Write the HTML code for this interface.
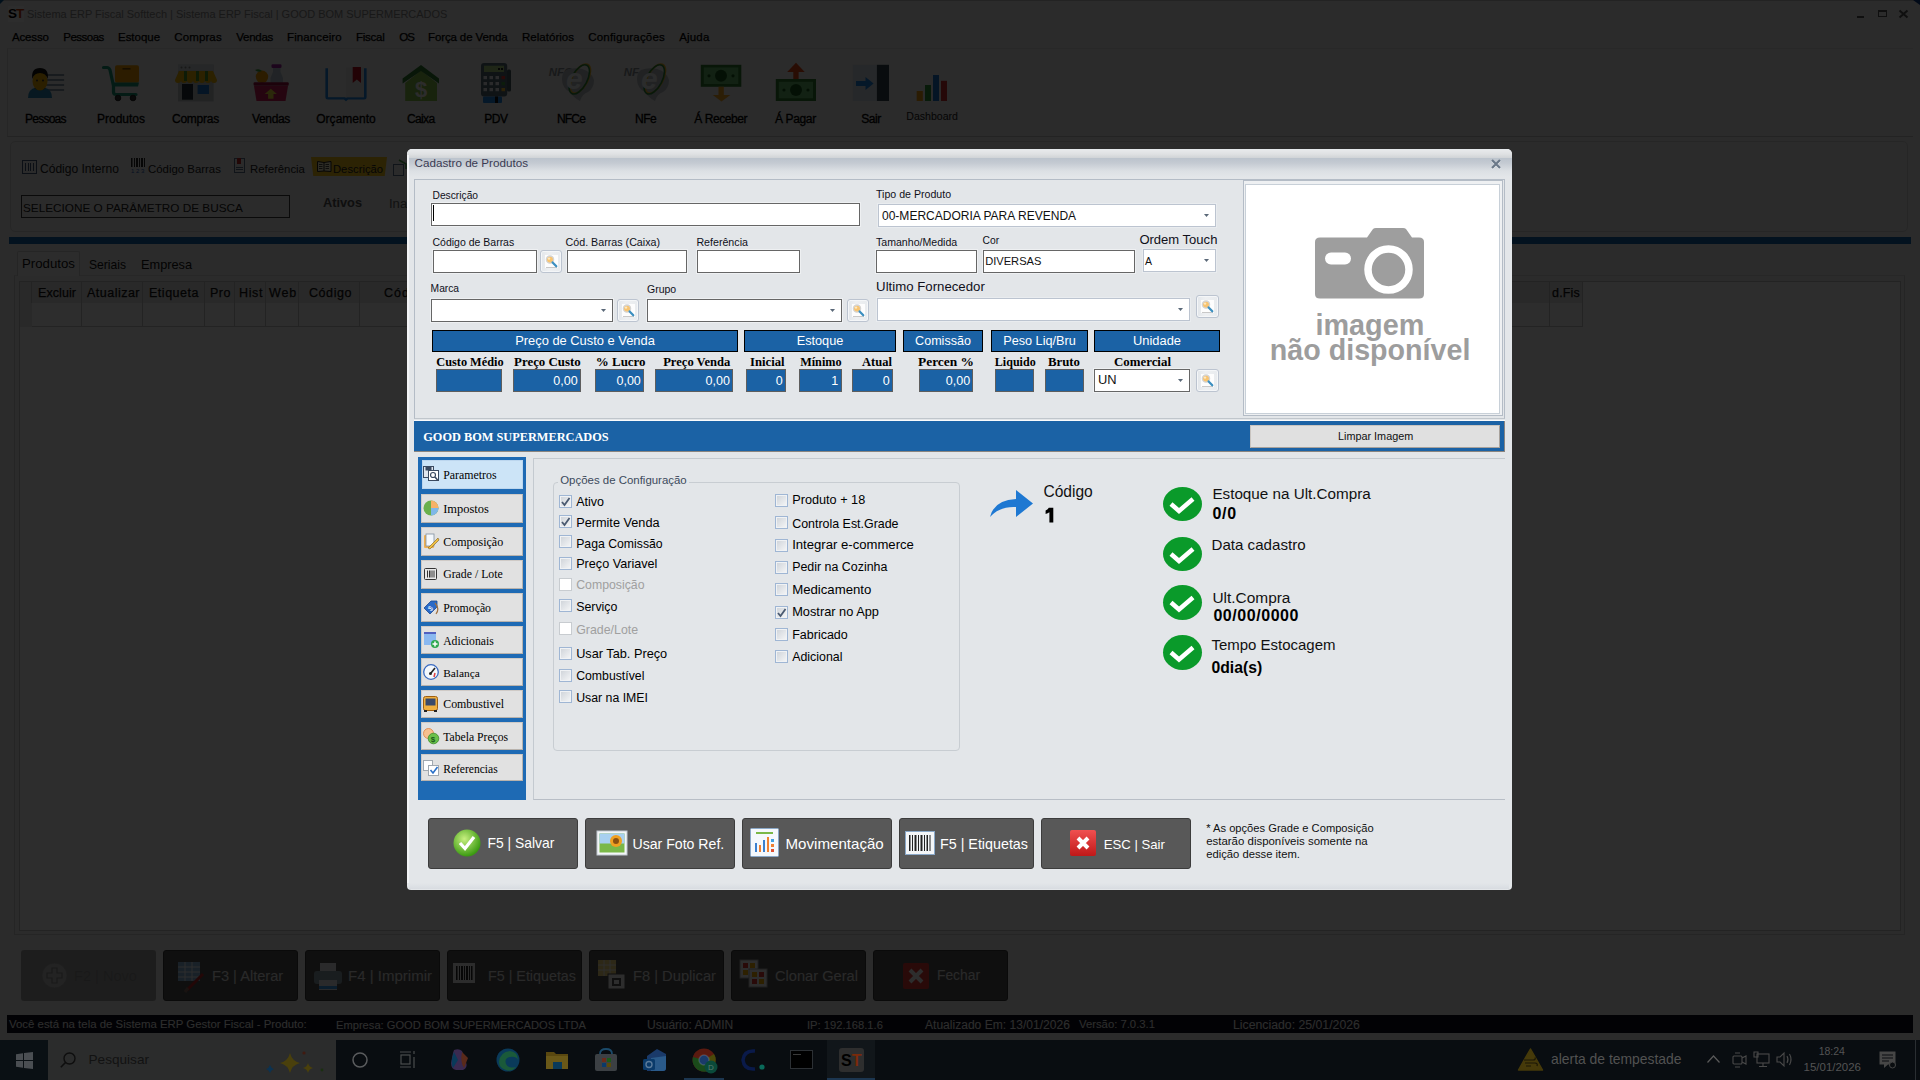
<!DOCTYPE html>
<html><head><meta charset="utf-8">
<style>
*{box-sizing:border-box;margin:0;padding:0}
html,body{width:1920px;height:1080px;overflow:hidden;background:#f0f0f0;font-family:"Liberation Sans",sans-serif;font-size:12px;color:#000;position:relative}
.a{position:absolute}
.t{position:absolute;white-space:nowrap;line-height:1}
svg.a{overflow:visible}
</style></head><body>
<div class="a" style="left:0px;top:0px;width:1920px;height:1080px;background:#f0f0f0"></div>
<div class="a" style="left:0px;top:0px;width:1920px;height:1px;background:#c8c8c8"></div>
<div class="a" style="left:8px;top:6px;width:16px;height:16px;background:#fff"></div>
<div class="t" style="left:8.00px;top:7.37px;font-size:13.5px;color:#000;font-weight:bold;font-family:'Liberation Sans';letter-spacing:-1px;"><span style="color:#000">S</span><span style="color:#c83a0a">T</span></div>
<div class="a" style="left:0px;top:0px;width:4px;height:4px;background:#0a5a9a;clip-path:polygon(0 0,100% 0,0 100%)"></div>
<div class="t" style="left:27.00px;top:8.91px;font-size:10.97px;color:#8a8a8a;font-weight:normal;font-family:'Liberation Sans';">Sistema ERP Fiscal Softtech | Sistema ERP Fiscal | GOOD BOM SUPERMERCADOS</div>
<div class="a" style="left:1857px;top:16px;width:7px;height:2px;background:#555"></div>
<div class="a" style="left:1878px;top:10px;width:9px;height:7px;border:1px solid #555;border-top-width:2px"></div>
<svg class="a" style="left:1899px;top:10px" width="9" height="8" viewBox="0 0 9 8"><path d="M0.5 0.5 L8.5 7.5 M8.5 0.5 L0.5 7.5" stroke="#555" stroke-width="2"/></svg>
<div class="a" style="left:1913px;top:0px;width:7px;height:5px;background:#0b3a8a;clip-path:polygon(0 0,100% 0,100% 100%)"></div>
<div class="t" style="left:12.00px;top:31.77px;font-size:11.5px;color:#000;font-weight:normal;font-family:'Liberation Sans';-webkit-text-stroke:0.25px #000;letter-spacing:-0.160px;">Acesso</div>
<div class="t" style="left:63.25px;top:31.77px;font-size:11.5px;color:#000;font-weight:normal;font-family:'Liberation Sans';-webkit-text-stroke:0.25px #000;letter-spacing:-0.515px;">Pessoas</div>
<div class="t" style="left:118.00px;top:31.77px;font-size:11.5px;color:#000;font-weight:normal;font-family:'Liberation Sans';-webkit-text-stroke:0.25px #000;letter-spacing:-0.028px;">Estoque</div>
<div class="t" style="left:174.25px;top:31.77px;font-size:11.5px;color:#000;font-weight:normal;font-family:'Liberation Sans';-webkit-text-stroke:0.25px #000;letter-spacing:0.121px;">Compras</div>
<div class="t" style="left:236.25px;top:31.77px;font-size:11.5px;color:#000;font-weight:normal;font-family:'Liberation Sans';-webkit-text-stroke:0.25px #000;letter-spacing:-0.270px;">Vendas</div>
<div class="t" style="left:287.00px;top:31.77px;font-size:11.5px;color:#000;font-weight:normal;font-family:'Liberation Sans';-webkit-text-stroke:0.25px #000;letter-spacing:0.106px;">Financeiro</div>
<div class="t" style="left:356.00px;top:31.77px;font-size:11.5px;color:#000;font-weight:normal;font-family:'Liberation Sans';-webkit-text-stroke:0.25px #000;letter-spacing:-0.255px;">Fiscal</div>
<div class="t" style="left:399.25px;top:31.77px;font-size:11.5px;color:#000;font-weight:normal;font-family:'Liberation Sans';-webkit-text-stroke:0.25px #000;letter-spacing:-1.058px;">OS</div>
<div class="t" style="left:428.00px;top:31.77px;font-size:11.5px;color:#000;font-weight:normal;font-family:'Liberation Sans';-webkit-text-stroke:0.25px #000;letter-spacing:-0.121px;">Força de Venda</div>
<div class="t" style="left:522.00px;top:31.77px;font-size:11.5px;color:#000;font-weight:normal;font-family:'Liberation Sans';-webkit-text-stroke:0.25px #000;letter-spacing:0.023px;">Relatórios</div>
<div class="t" style="left:588.25px;top:31.77px;font-size:11.5px;color:#000;font-weight:normal;font-family:'Liberation Sans';-webkit-text-stroke:0.25px #000;letter-spacing:0.200px;">Configurações</div>
<div class="t" style="left:679.25px;top:31.77px;font-size:11.5px;color:#000;font-weight:normal;font-family:'Liberation Sans';-webkit-text-stroke:0.25px #000;letter-spacing:0.167px;">Ajuda</div>
<div class="a" style="left:7px;top:48px;width:1906px;height:89px;border-left:1px solid #d5d5d5;border-top:1px solid #e4e4e4;border-bottom:1px solid #c4c4c4"></div>
<div class="t" style="left:25.00px;top:112.84px;font-size:12px;color:#000;font-weight:normal;font-family:'Liberation Sans';-webkit-text-stroke:0.3px #000;letter-spacing:-0.754px;">Pessoas</div>
<div class="t" style="left:97.00px;top:112.84px;font-size:12px;color:#000;font-weight:normal;font-family:'Liberation Sans';-webkit-text-stroke:0.3px #000;letter-spacing:-0.004px;">Produtos</div>
<div class="t" style="left:172.00px;top:112.84px;font-size:12px;color:#000;font-weight:normal;font-family:'Liberation Sans';-webkit-text-stroke:0.3px #000;letter-spacing:-0.240px;">Compras</div>
<div class="t" style="left:252.00px;top:112.84px;font-size:12px;color:#000;font-weight:normal;font-family:'Liberation Sans';-webkit-text-stroke:0.3px #000;letter-spacing:-0.340px;">Vendas</div>
<div class="t" style="left:316.25px;top:112.84px;font-size:12px;color:#000;font-weight:normal;font-family:'Liberation Sans';-webkit-text-stroke:0.3px #000;letter-spacing:0.016px;">Orçamento</div>
<div class="t" style="left:407.00px;top:112.84px;font-size:12px;color:#000;font-weight:normal;font-family:'Liberation Sans';-webkit-text-stroke:0.3px #000;letter-spacing:-0.636px;">Caixa</div>
<div class="t" style="left:484.25px;top:112.84px;font-size:12px;color:#000;font-weight:normal;font-family:'Liberation Sans';-webkit-text-stroke:0.3px #000;letter-spacing:-0.475px;">PDV</div>
<div class="t" style="left:557.00px;top:112.84px;font-size:12px;color:#000;font-weight:normal;font-family:'Liberation Sans';-webkit-text-stroke:0.3px #000;letter-spacing:-0.834px;">NFCe</div>
<div class="t" style="left:635.00px;top:112.84px;font-size:12px;color:#000;font-weight:normal;font-family:'Liberation Sans';-webkit-text-stroke:0.3px #000;letter-spacing:-0.473px;">NFe</div>
<div class="t" style="left:694.25px;top:112.84px;font-size:12px;color:#000;font-weight:normal;font-family:'Liberation Sans';-webkit-text-stroke:0.3px #000;letter-spacing:-0.438px;">Á Receber</div>
<div class="t" style="left:775.00px;top:112.84px;font-size:12px;color:#000;font-weight:normal;font-family:'Liberation Sans';-webkit-text-stroke:0.3px #000;letter-spacing:-0.373px;">Á Pagar</div>
<div class="t" style="left:861.25px;top:112.84px;font-size:12px;color:#000;font-weight:normal;font-family:'Liberation Sans';-webkit-text-stroke:0.3px #000;letter-spacing:-0.460px;">Sair</div>
<div class="t" style="left:906.25px;top:111.04px;font-size:10.58px;color:#222;font-weight:normal;font-family:'Liberation Sans';">Dashboard</div>
<svg class="a" style="left:26px;top:64px" width="40" height="40" viewBox="0 0 40 40"><g fill="#8a9aaa"><rect x="18.6" y="10" width="19.5" height="2"/><rect x="18.6" y="15" width="19.5" height="2"/><rect x="18.6" y="20" width="19.5" height="2"/><rect x="18.6" y="25" width="19.5" height="2"/></g><path d="M2 34 Q2 25 10 23.5 L18 23.5 Q26 25 26 34Z" fill="#2a8ab8"/><path d="M9 23.5 Q14 27 19 23.5" stroke="#0a3a6a" stroke-width="2" fill="none"/><ellipse cx="14" cy="17" rx="7.5" ry="9.5" fill="#f0b000"/><path d="M6.2 15 Q5 4 14 4 Q23 4 21.8 15 Q20 9 14 9 Q8 9 6.2 15Z" fill="#111"/><circle cx="11" cy="16.5" r="1" fill="#333"/><circle cx="17" cy="16.5" r="1" fill="#333"/></svg>
<svg class="a" style="left:102px;top:64px" width="40" height="40" viewBox="0 0 40 40"><path d="M1.5 3.5 L5 3.5 Q7 3.5 8 6 L11.5 22 L11.5 28 Q11.5 30.5 14 30.5 L34 30.5" stroke="#1a9a7a" stroke-width="3.2" fill="none" stroke-linecap="round"/><rect x="13" y="1.3" width="24" height="17.5" rx="2" fill="#f5a000"/><rect x="20.5" y="4" width="8" height="1.6" fill="#7a4a00"/><path d="M10 18.5 L37 18.5 L36 22.5 L11 22.5Z" fill="#1a9a7a"/><circle cx="16" cy="34" r="2.8" fill="#333" stroke="#222"/><circle cx="31" cy="34" r="2.8" fill="#333" stroke="#222"/></svg>
<svg class="a" style="left:176px;top:64px" width="40" height="40" viewBox="0 0 40 40"><rect x="2" y="0.7" width="35.6" height="36.7" fill="#c0c4c8"/><rect x="2" y="0.7" width="35.6" height="6" fill="#d8dcdf"/><circle cx="5.5" cy="3.6" r="1" fill="#888"/><circle cx="9.5" cy="3.6" r="1" fill="#888"/><circle cx="13.5" cy="3.6" r="1" fill="#888"/><path d="M3 7 L37 7 L41 16 Q41 19 38 19 Q35 19 35 16 Q35 19 32 19 Q29 19 29 16 Q29 19 26 19 Q23 19 23 16 Q23 19 20 19 Q17 19 17 16 Q17 19 14 19 Q11 19 11 16 Q11 19 8 19 Q5 19 5 16 Q5 19 2 19 Q-1 19 -1 16Z" fill="#f5b800"/><path d="M8 7 L11 7 L11 17 L8 17Z M20 7 L23 7 L23 17 L20 17Z M29 7 L32 7 L32 17 L29 17Z" fill="#4a9a2a"/><rect x="6" y="20" width="11" height="15.7" fill="#263238"/><rect x="21.6" y="21" width="11.4" height="9" fill="#1e78d2"/></svg>
<svg class="a" style="left:252px;top:64px" width="40" height="40" viewBox="0 0 40 40"><rect x="19.5" y="0.3" width="10" height="3.6" rx="1.2" fill="#a020a0"/><path d="M21 3.9 L28.5 3.9 L28.5 8 L31 14 L31 19 L18.5 19 L18.5 14 L21 8Z" fill="#b8c8d4"/><circle cx="10" cy="12.8" r="6.2" fill="#f5a000"/><path d="M3 6 Q7 4 10 7 Q6 9 3 6Z" fill="#3aa03a"/><path d="M2 22 L36 22 L33.5 37 L4.5 37Z" fill="#d0205a"/><rect x="1.6" y="18.2" width="35.1" height="3.6" rx="1" fill="#a01040"/><path d="M18.8 24.7 L24.9 30 L21.5 30 L21.5 34.8 L16.1 34.8 L16.1 30 L12.7 30Z" fill="#f0e040"/></svg>
<svg class="a" style="left:327px;top:64px" width="40" height="40" viewBox="0 0 40 40"><path d="M-0.3 4.2 L-0.3 33 Q-0.3 34.2 1 34.2 L17.5 34.2 L19 35.5 L20.5 34.2 L37 34.2 Q38.3 34.2 38.3 33 L38.3 4.2" fill="none" stroke="#1e88e5" stroke-width="2.6"/><rect x="1" y="3.2" width="36" height="30" fill="#f4f4f4"/><rect x="19" y="3.2" width="18" height="30" fill="#e8e8e8"/><path d="M25.7 3 L34 3 L34 19 L29.85 15.5 L25.7 19Z" fill="#c01020"/></svg>
<svg class="a" style="left:402px;top:64px" width="40" height="40" viewBox="0 0 40 40"><path d="M3.2 19 L19 6.5 L35 19 L35 37 L3.2 37Z" fill="#8bc34a"/><path d="M19 1 L37 14.5 L37 19.6 L19 7 L0.6 19.6 L0.6 14.5Z" fill="#2e7d32"/><text x="19.2" y="33" font-size="22" font-weight="bold" text-anchor="middle" fill="#fafafa" font-family="Liberation Sans">$</text></svg>
<svg class="a" style="left:477px;top:64px" width="40" height="40" viewBox="0 0 40 40"><rect x="30" y="5.6" width="4" height="22" rx="1.5" fill="#455a64"/><rect x="4" y="-1" width="26.2" height="33.5" rx="3" fill="#546e7a"/><rect x="7" y="1.7" width="20" height="6.3" fill="#aed581"/><rect x="21" y="4" width="2" height="2" fill="#222"/><rect x="24" y="4" width="2" height="2" fill="#222"/><g fill="#eceff1"><rect x="6.5" y="12" width="3.5" height="3.2"/><rect x="12.5" y="12" width="3.5" height="3.2"/><rect x="18.5" y="12" width="3.5" height="3.2"/><rect x="6.5" y="18" width="3.5" height="3.2"/><rect x="12.5" y="18" width="3.5" height="3.2"/><rect x="18.5" y="18" width="3.5" height="3.2"/><rect x="6.5" y="24" width="3.5" height="3.2"/><rect x="12.5" y="24" width="3.5" height="3.2"/><rect x="18.5" y="24" width="3.5" height="3.2"/></g><rect x="24.5" y="12" width="3.5" height="3.2" fill="#e53935"/><rect x="24.5" y="18" width="3.5" height="3.2" fill="#43a047"/><rect x="24.5" y="24" width="3.5" height="3.2" fill="#fbc02d"/><rect x="6" y="32.5" width="19" height="6.5" rx="1" fill="#1e88e5"/><rect x="18" y="32.5" width="3" height="6.5" fill="#111"/></svg>
<svg class="a" style="left:552px;top:64px" width="40" height="40" viewBox="0 0 40 40"><text x="-3.3" y="11.8" font-size="11.5" font-style="italic" font-weight="bold" fill="#8a9096" font-family="Liberation Sans">NFC</text><path d="M14 6 Q22 3 30 5 Q40 8 42 16 Q42 24 36 28 Q30 30 28 37 Q22 34 18 28 Q10 24 10 15 Q10 9 14 6Z" fill="#b8bec4"/><ellipse cx="28.3" cy="14.6" rx="7.8" ry="16" transform="rotate(28 28.3 14.6)" fill="none" stroke="#f9b825" stroke-width="1.6"/><ellipse cx="27.3" cy="15.4" rx="7.8" ry="16" transform="rotate(28 27.3 15.4)" fill="none" stroke="#2e8b3a" stroke-width="1.6"/><text x="14" y="25" font-size="30" font-style="italic" font-weight="bold" fill="#f4f6f8" font-family="Liberation Sans">e</text></svg>
<svg class="a" style="left:627px;top:64px" width="40" height="40" viewBox="0 0 40 40"><text x="-3.3" y="11.8" font-size="11.5" font-style="italic" font-weight="bold" fill="#8a9096" font-family="Liberation Sans">NF</text><path d="M14 6 Q22 3 30 5 Q40 8 42 16 Q42 24 36 28 Q30 30 28 37 Q22 34 18 28 Q10 24 10 15 Q10 9 14 6Z" fill="#b8bec4"/><ellipse cx="28.3" cy="14.6" rx="7.8" ry="16" transform="rotate(28 28.3 14.6)" fill="none" stroke="#f9b825" stroke-width="1.6"/><ellipse cx="27.3" cy="15.4" rx="7.8" ry="16" transform="rotate(28 27.3 15.4)" fill="none" stroke="#2e8b3a" stroke-width="1.6"/><text x="14" y="25" font-size="30" font-style="italic" font-weight="bold" fill="#f4f6f8" font-family="Liberation Sans">e</text></svg>
<svg class="a" style="left:702px;top:64px" width="40" height="40" viewBox="0 0 40 40"><rect x="-1.2" y="0.8" width="40.5" height="22" fill="#2e7d32"/><rect x="1.8" y="3.5" width="34.5" height="16.5" fill="#66bb6a"/><circle cx="19" cy="11.8" r="6" fill="#1b5e20"/><circle cx="7" cy="11.8" r="1.6" fill="#1b5e20"/><circle cx="31" cy="11.8" r="1.6" fill="#1b5e20"/><rect x="16.5" y="22.7" width="5.3" height="9" fill="#f9a825"/><path d="M10.8 31 L28.3 31 L19.5 37.5Z" fill="#f9a825"/></svg>
<svg class="a" style="left:776px;top:64px" width="40" height="40" viewBox="0 0 40 40"><path d="M20 -1.3 L28.7 8 L11.2 8Z" fill="#e64a19"/><rect x="17.3" y="7.5" width="5.3" height="8" fill="#e64a19"/><rect x="-0.2" y="15" width="40.2" height="22" fill="#2e7d32"/><rect x="2.8" y="17.8" width="34.2" height="16.5" fill="#66bb6a"/><circle cx="20" cy="26" r="6" fill="#1b5e20"/><circle cx="8" cy="26" r="1.6" fill="#1b5e20"/><circle cx="32" cy="26" r="1.6" fill="#1b5e20"/></svg>
<svg class="a" style="left:852px;top:64px" width="40" height="40" viewBox="0 0 40 40"><rect x="0.8" y="0.8" width="24.1" height="36.2" fill="#d8e0ea"/><rect x="24.9" y="0.8" width="12.1" height="36.2" fill="#37474f"/><path d="M4 17 L13.5 17 L13.5 12.9 L21.6 19.5 L13.5 26 L13.5 22 L4 22Z" fill="#1e88e5"/></svg>
<svg class="a" style="left:916px;top:75px" width="32" height="26" viewBox="0 0 32 26"><rect x="0.7" y="16" width="6.1" height="10" fill="#f39c12"/><rect x="9" y="10" width="6" height="16" fill="#2e9a3a"/><rect x="17" y="0" width="6" height="26" fill="#1e78d2"/><rect x="25" y="5.8" width="6" height="20.2" fill="#d32f2f"/></svg>
<div class="a" style="left:10px;top:141px;width:1898px;height:91px;border:1px solid #d8d8d8;border-radius:5px"></div>
<div class="a" style="left:22px;top:160px;width:15px;height:14px;border:1.5px solid #405878;background:repeating-linear-gradient(90deg,#405878 0 1px,transparent 1px 2.5px);background-clip:content-box;padding:2px"></div>
<div class="t" style="left:40.00px;top:163.31px;font-size:12.04px;color:#222;font-weight:normal;font-family:'Liberation Sans';">Código Interno</div>
<svg class="a" style="left:131px;top:158px" width="14" height="15" viewBox="0 0 14 15"><g fill="#222"><rect x="0" y="0" width="1.5" height="9"/><rect x="3" y="0" width="1" height="9"/><rect x="5" y="0" width="2" height="9"/><rect x="8" y="0" width="1" height="9"/><rect x="10" y="0" width="2" height="9"/><rect x="13" y="0" width="1" height="9"/></g><text x="0" y="15" font-size="6" fill="#1e60c0" font-family="Liberation Sans">1 2 3</text></svg>
<div class="t" style="left:148.00px;top:163.83px;font-size:11.42px;color:#222;font-weight:normal;font-family:'Liberation Sans';">Código Barras</div>
<svg class="a" style="left:234px;top:158px" width="11" height="15" viewBox="0 0 11 15"><rect x="0.5" y="0.5" width="10" height="14" fill="#f4f4f4" stroke="#5a7090"/><rect x="3" y="0" width="4" height="6" fill="#c62828"/><rect x="2" y="9" width="7" height="1" fill="#5a7090"/><rect x="2" y="11" width="7" height="1" fill="#5a7090"/></svg>
<div class="t" style="left:250.00px;top:163.88px;font-size:11.37px;color:#222;font-weight:normal;font-family:'Liberation Sans';">Referência</div>
<div class="a" style="left:311px;top:157px;width:76px;height:19px;background:#f5c518;clip-path:polygon(0 0,100% 0,97% 100%,3% 100%)"></div>
<svg class="a" style="left:317px;top:161px" width="15" height="11" viewBox="0 0 15 11"><path d="M0.5 0.5 L7 1.5 L14 0.5 L14 10.5 L7 10 L0.5 10.5Z" fill="#fff8d0" stroke="#222"/><path d="M7 1.5 L7 10" stroke="#222"/><g stroke="#222" stroke-width="0.8"><path d="M2 3.5 H5.5 M2 5.5 H5.5 M2 7.5 H5.5 M8.5 3.5 H12 M8.5 5.5 H12 M8.5 7.5 H12"/></g></svg>
<div class="t" style="left:333.00px;top:163.98px;font-size:11.25px;color:#222;font-weight:normal;font-family:'Liberation Sans';">Descrição</div>
<svg class="a" style="left:393px;top:160px" width="14" height="16" viewBox="0 0 14 16"><rect x="0.5" y="4.5" width="10" height="11" fill="none" stroke="#5a7090"/><path d="M6 0 L13 4 L13 9" stroke="#43a047" fill="none" stroke-width="1.5"/></svg>
<div class="a" style="left:21px;top:195px;width:269px;height:23px;border:1px solid #3c3c3c;background:#f0f0f0"></div>
<div class="t" style="left:23.00px;top:201.55px;font-size:11.76px;color:#222;font-weight:normal;font-family:'Liberation Sans';">SELECIONE O PARÂMETRO DE BUSCA</div>
<div class="t" style="left:323.00px;top:197.20px;font-size:12.76px;color:#555;font-weight:bold;font-family:'Liberation Sans';">Ativos</div>
<div class="t" style="left:389.00px;top:196.94px;font-size:13.06px;color:#666;font-weight:normal;font-family:'Liberation Sans';">Inativos</div>
<div class="a" style="left:9px;top:237px;width:1902px;height:7px;background:#1565b0"></div>
<div class="a" style="left:14px;top:275px;width:1891px;height:660px;border:1px solid #cfcfcf;border-top-color:#dadada"></div>
<div class="a" style="left:17px;top:251px;width:63px;height:25px;border:1px solid #d0d0d0;border-bottom:none;background:#f9f9f9;border-radius:2px 2px 0 0"></div>
<div class="t" style="left:22.00px;top:257.29px;font-size:13.24px;color:#111;font-weight:normal;font-family:'Liberation Sans';">Produtos</div>
<div class="t" style="left:89.00px;top:259.26px;font-size:12.1px;color:#111;font-weight:normal;font-family:'Liberation Sans';">Seriais</div>
<div class="t" style="left:141.00px;top:258.71px;font-size:12.75px;color:#111;font-weight:normal;font-family:'Liberation Sans';">Empresa</div>
<div class="a" style="left:19px;top:281px;width:1882px;height:650px;border:1px solid #c4c4c4;background:#fdfdfd"></div>
<div class="a" style="left:20px;top:282px;width:1563px;height:21px;background:#e8e8e8"></div>
<div class="a" style="left:31px;top:282px;width:1px;height:45px;background:#c8c8c8"></div>
<div class="a" style="left:81px;top:282px;width:1px;height:45px;background:#c8c8c8"></div>
<div class="a" style="left:142px;top:282px;width:1px;height:45px;background:#c8c8c8"></div>
<div class="a" style="left:204px;top:282px;width:1px;height:45px;background:#c8c8c8"></div>
<div class="a" style="left:234px;top:282px;width:1px;height:45px;background:#c8c8c8"></div>
<div class="a" style="left:265px;top:282px;width:1px;height:45px;background:#c8c8c8"></div>
<div class="a" style="left:298px;top:282px;width:1px;height:45px;background:#c8c8c8"></div>
<div class="a" style="left:359px;top:282px;width:1px;height:45px;background:#c8c8c8"></div>
<div class="a" style="left:1549px;top:282px;width:1px;height:45px;background:#c8c8c8"></div>
<div class="a" style="left:1582px;top:282px;width:1px;height:45px;background:#c8c8c8"></div>
<div class="a" style="left:32px;top:326px;width:1551px;height:1px;background:#c8c8c8"></div>
<div class="a" style="left:20px;top:303px;width:12px;height:24px;background:#e6e6e6"></div>
<div class="t" style="left:38.00px;top:287.42px;font-size:12.5px;color:#111;font-weight:normal;font-family:'Liberation Sans';-webkit-text-stroke:0.25px #111;letter-spacing:0.071px;">Excluir</div>
<div class="t" style="left:87.00px;top:287.42px;font-size:12.5px;color:#111;font-weight:normal;font-family:'Liberation Sans';-webkit-text-stroke:0.25px #111;letter-spacing:0.485px;">Atualizar</div>
<div class="t" style="left:149.00px;top:287.42px;font-size:12.5px;color:#111;font-weight:normal;font-family:'Liberation Sans';-webkit-text-stroke:0.25px #111;letter-spacing:0.517px;">Etiqueta</div>
<div class="t" style="left:210.00px;top:287.42px;font-size:12.5px;color:#111;font-weight:normal;font-family:'Liberation Sans';-webkit-text-stroke:0.25px #111;letter-spacing:0.516px;">Pro</div>
<div class="t" style="left:239.00px;top:287.42px;font-size:12.5px;color:#111;font-weight:normal;font-family:'Liberation Sans';-webkit-text-stroke:0.25px #111;letter-spacing:0.618px;">Hist</div>
<div class="t" style="left:269.00px;top:287.42px;font-size:12.5px;color:#111;font-weight:normal;font-family:'Liberation Sans';-webkit-text-stroke:0.25px #111;letter-spacing:0.841px;">Web</div>
<div class="t" style="left:309.00px;top:287.42px;font-size:12.5px;color:#111;font-weight:normal;font-family:'Liberation Sans';-webkit-text-stroke:0.25px #111;letter-spacing:0.565px;">Código</div>
<div class="t" style="left:384.00px;top:287.42px;font-size:12.5px;color:#111;font-weight:normal;font-family:'Liberation Sans';-webkit-text-stroke:0.25px #111;letter-spacing:1.023px;">Cód</div>
<div class="t" style="left:1552.00px;top:287.42px;font-size:12.5px;color:#111;font-weight:normal;font-family:'Liberation Sans';-webkit-text-stroke:0.25px #111;letter-spacing:0.183px;">d.Fis</div>
<div class="a" style="left:21px;top:950px;width:135px;height:51px;background:#a6a6a6;border-radius:3px"></div>
<div class="a" style="left:163px;top:950px;width:135px;height:51px;background:#585858;border-radius:3px;border:1px solid #3a3a3a"></div>
<div class="a" style="left:305px;top:950px;width:135px;height:51px;background:#585858;border-radius:3px;border:1px solid #3a3a3a"></div>
<div class="a" style="left:447px;top:950px;width:135px;height:51px;background:#585858;border-radius:3px;border:1px solid #3a3a3a"></div>
<div class="a" style="left:589px;top:950px;width:135px;height:51px;background:#585858;border-radius:3px;border:1px solid #3a3a3a"></div>
<div class="a" style="left:731px;top:950px;width:135px;height:51px;background:#585858;border-radius:3px;border:1px solid #3a3a3a"></div>
<div class="a" style="left:873px;top:950px;width:135px;height:51px;background:#585858;border-radius:3px;border:1px solid #3a3a3a"></div>
<div class="t" style="left:74.00px;top:968.65px;font-size:14.59px;color:#909090;font-weight:normal;font-family:'Liberation Sans';">F2 | Novo</div>
<svg class="a" style="left:41px;top:962px" width="27" height="27" viewBox="0 0 27 27"><circle cx="13.5" cy="13.5" r="12.5" fill="#c4c4c4" stroke="#a0a0a0" stroke-width="0.6"/><path d="M11 6 H16 V11 H21 V16 H16 V21 H11 V16 H6 V11 H11Z" fill="#c4c4c4" stroke="#909090" stroke-width="1.2"/></svg>
<div class="t" style="left:212.00px;top:968.63px;font-size:14.61px;color:#e8e8e8;font-weight:normal;font-family:'Liberation Sans';">F3 | Alterar</div>
<svg class="a" style="left:178px;top:962px" width="30" height="30" viewBox="0 0 30 30"><rect x="0" y="0" width="22" height="19" fill="#90b8e0"/><g stroke="#fff" stroke-width="1"><path d="M0 5 H22 M0 10 H22 M0 15 H22 M7 0 V19 M14 0 V19"/></g><path d="M9 28 L25 12" stroke="#c62828" stroke-width="3"/><path d="M7 30 L10 26" stroke="#8d6e63" stroke-width="3"/></svg>
<div class="t" style="left:348.00px;top:968.29px;font-size:15.02px;color:#e8e8e8;font-weight:normal;font-family:'Liberation Sans';">F4 | Imprimir</div>
<svg class="a" style="left:313px;top:963px" width="30" height="28" viewBox="0 0 30 28"><rect x="7" y="0" width="16" height="9" fill="#eceff1"/><rect x="1" y="8" width="28" height="13" rx="3" fill="#90a4ae"/><rect x="6" y="17" width="18" height="10" fill="#eceff1"/><rect x="6" y="23" width="18" height="3" fill="#42a5f5"/></svg>
<div class="t" style="left:488.00px;top:968.90px;font-size:14.3px;color:#e8e8e8;font-weight:normal;font-family:'Liberation Sans';">F5 | Etiquetas</div>
<svg class="a" style="left:453px;top:963px" width="22" height="20" viewBox="0 0 22 20"><rect x="0" y="0" width="22" height="20" fill="#f5f5f5"/><g fill="#222"><rect x="3" y="3" width="1.5" height="14"/><rect x="6" y="3" width="1" height="14"/><rect x="8" y="3" width="2" height="14"/><rect x="11" y="3" width="1" height="14"/><rect x="13" y="3" width="2" height="14"/><rect x="16" y="3" width="1" height="14"/><rect x="18" y="3" width="1.5" height="14"/></g></svg>
<div class="t" style="left:633.00px;top:968.56px;font-size:14.69px;color:#e8e8e8;font-weight:normal;font-family:'Liberation Sans';">F8 | Duplicar</div>
<svg class="a" style="left:598px;top:960px" width="28" height="30" viewBox="0 0 28 30"><rect x="0" y="0" width="18" height="16" fill="#ffe082"/><g stroke="#fff"><path d="M0 5 H18 M0 10 H18 M6 0 V16 M12 0 V16"/></g><rect x="10" y="14" width="17" height="15" fill="#fff" stroke="#555"/><rect x="15" y="19" width="7" height="6" fill="none" stroke="#555" stroke-width="2"/></svg>
<div class="t" style="left:775.00px;top:968.61px;font-size:14.64px;color:#e8e8e8;font-weight:normal;font-family:'Liberation Sans';">Clonar Geral</div>
<svg class="a" style="left:740px;top:960px" width="28" height="28" viewBox="0 0 28 28"><rect x="0" y="0" width="18" height="18" fill="#fff" stroke="#aaa"/><rect x="3" y="3" width="5" height="5" fill="#e53935"/><rect x="10" y="3" width="5" height="5" fill="#ffb300"/><rect x="3" y="10" width="5" height="5" fill="#ffb300"/><rect x="10" y="10" width="5" height="5" fill="#e53935"/><rect x="9" y="9" width="18" height="18" fill="#fff" stroke="#aaa"/><rect x="12" y="12" width="5" height="5" fill="#ffb300"/><rect x="19" y="12" width="5" height="5" fill="#e53935"/><rect x="12" y="19" width="5" height="5" fill="#e53935"/><rect x="19" y="19" width="5" height="5" fill="#ffb300"/></svg>
<div class="t" style="left:937.00px;top:969.30px;font-size:13.82px;color:#e8e8e8;font-weight:normal;font-family:'Liberation Sans';">Fechar</div>
<svg class="a" style="left:903px;top:963px" width="26" height="26" viewBox="0 0 26 26"><rect x="0" y="0" width="26" height="26" rx="2" fill="#e53935"/><path d="M7 7 L19 19 M19 7 L7 19" stroke="#fff" stroke-width="4"/></svg>
<div class="a" style="left:7px;top:1015px;width:1906px;height:18px;background:#10101e"></div>
<div class="t" style="left:9.00px;top:1019.34px;font-size:11.41px;color:#fff;font-weight:normal;font-family:'Liberation Sans';">Você está na tela de Sistema ERP Gestor Fiscal - Produto:</div>
<div class="t" style="left:336.00px;top:1019.56px;font-size:11.15px;color:#fff;font-weight:normal;font-family:'Liberation Sans';">Empresa: GOOD BOM SUPERMERCADOS LTDA</div>
<div class="t" style="left:647.00px;top:1018.81px;font-size:12.04px;color:#fff;font-weight:normal;font-family:'Liberation Sans';">Usuário: ADMIN</div>
<div class="t" style="left:807.00px;top:1019.52px;font-size:11.2px;color:#fff;font-weight:normal;font-family:'Liberation Sans';">IP: 192.168.1.6</div>
<div class="t" style="left:925.00px;top:1018.78px;font-size:12.07px;color:#fff;font-weight:normal;font-family:'Liberation Sans';">Atualizado Em: 13/01/2026</div>
<div class="t" style="left:1079.00px;top:1019.43px;font-size:11.3px;color:#fff;font-weight:normal;font-family:'Liberation Sans';">Versão: 7.0.3.1</div>
<div class="t" style="left:1233.00px;top:1018.60px;font-size:12.28px;color:#fff;font-weight:normal;font-family:'Liberation Sans';">Licenciado: 25/01/2026</div>
<div class="a" style="left:0px;top:0px;width:1920px;height:1080px;background:rgba(0,0,0,0.825)"></div>
<div class="a" style="left:0px;top:1040px;width:1920px;height:40px;background:#090d11"></div>
<div class="a" style="left:0px;top:1040px;width:48px;height:40px;background:#0a1014"></div>
<svg class="a" style="left:16px;top:1052px" width="17" height="17" viewBox="0 0 17 17"><g fill="#4a4e52"><path d="M0 2.3 L7 1.3 V8 H0Z"/><path d="M8 1.1 L17 0 V8 H8Z"/><path d="M0 9 H7 V15.7 L0 14.7Z"/><path d="M8 9 H17 V17 L8 15.9Z"/></g></svg>
<div class="a" style="left:48px;top:1040px;width:288px;height:40px;background:#2b2c2c"></div>
<svg class="a" style="left:60px;top:1052px" width="16" height="16" viewBox="0 0 16 16"><circle cx="9.5" cy="6.5" r="5.5" fill="none" stroke="#0e0e0e" stroke-width="1.4"/><path d="M5.5 10.5 L0.8 15.2" stroke="#0e0e0e" stroke-width="1.6"/></svg>
<div class="t" style="left:88.50px;top:1053.48px;font-size:13.61px;color:#121212;font-weight:normal;font-family:'Liberation Sans';">Pesquisar</div>
<svg class="a" style="left:264px;top:1047px" width="64" height="26" viewBox="0 0 64 26"><path d="M26 6 Q28 14 36 16 Q28 18 26 26 Q24 18 16 16 Q24 14 26 6Z" fill="#4a400c"/><path d="M44 16 Q45 20 49 21 Q45 22 44 26 Q43 22 39 21 Q43 20 44 16Z" fill="#4a400c"/><path d="M6 18 Q7 21 10 22 Q7 23 6 26 Q5 23 2 22 Q5 21 6 18Z" fill="#0c3250"/><circle cx="40" cy="6" r="1.6" fill="#401a10"/><circle cx="58" cy="23" r="1.4" fill="#1a3010"/></svg>
<svg class="a" style="left:352px;top:1052px" width="16" height="16" viewBox="0 0 16 16"><circle cx="8" cy="8" r="7" fill="none" stroke="#5a5c5e" stroke-width="1.5"/></svg>
<svg class="a" style="left:400px;top:1050px" width="16" height="20" viewBox="0 0 16 20"><g fill="none" stroke="#4a4c4e" stroke-width="1.2"><rect x="1" y="5" width="9" height="9"/><path d="M0 2 H11 M0 17 H11 M14 1 V4 M14 7 V18"/></g></svg>
<svg class="a" style="left:448px;top:1048px" width="23" height="23" viewBox="0 0 23 23"><path d="M6 2 Q11 0 14 3 L18 14 Q20 20 15 22 L8 22 Q3 21 3 15 L5 5Z" fill="#3a2a50"/><path d="M6 4 L10 12 L5 20 Q2 14 6 4Z" fill="#0a3a5a"/><path d="M14 4 L20 10 L16 20 Q12 14 14 4Z" fill="#5a2a1a"/></svg>
<svg class="a" style="left:496px;top:1048px" width="24" height="24" viewBox="0 0 24 24"><circle cx="12" cy="12" r="11.5" fill="#0a3a5a"/><path d="M3 14 Q4 4 14 3 Q22 4 22 12 Q20 8 14 9 Q8 10 10 16 Q12 21 20 19 Q16 24 10 22 Q3 20 3 14Z" fill="#1a5a3a"/></svg>
<svg class="a" style="left:546px;top:1050px" width="22" height="20" viewBox="0 0 22 20"><path d="M0 2 H8 L10 4 H22 V19 H0Z" fill="#5a4810"/><rect x="0" y="6" width="22" height="13" fill="#6a5818"/><rect x="7" y="12" width="9" height="7" fill="#0a3a5a"/></svg>
<svg class="a" style="left:594px;top:1048px" width="24" height="24" viewBox="0 0 24 24"><path d="M6 6 Q6 1 12 1 Q18 1 18 6" fill="none" stroke="#1a4a6a" stroke-width="1.8"/><rect x="1" y="6" width="22" height="17" rx="2" fill="#3c4044"/><rect x="8" y="10" width="4" height="4" fill="#6a2a1a"/><rect x="13" y="10" width="4" height="4" fill="#1a5a1a"/><rect x="8" y="15" width="4" height="4" fill="#0a3a6a"/><rect x="13" y="15" width="4" height="4" fill="#5a4a0a"/></svg>
<svg class="a" style="left:643px;top:1048px" width="24" height="24" viewBox="0 0 24 24"><path d="M4 8 L14 1 L23 6 V20 Q23 23 20 23 H4Z" fill="#1a3a6a"/><path d="M8 10 L23 8 V20 Q23 23 20 23 H8Z" fill="#2a5a8a"/><rect x="0" y="11" width="12" height="11" rx="1.5" fill="#0a3a6a"/><circle cx="6" cy="16.5" r="3" fill="none" stroke="#5a7a9a" stroke-width="1.4"/></svg>
<svg class="a" style="left:692px;top:1048px" width="26" height="26" viewBox="0 0 26 26"><circle cx="12" cy="12" r="11.5" fill="#5a1a10"/><path d="M12 12 L22 6 A11.5 11.5 0 0 1 14 23.5Z" fill="#4a4a0a"/><path d="M12 12 L14 23.5 A11.5 11.5 0 0 1 1 9Z" fill="#1a4a1a"/><circle cx="12" cy="12" r="5" fill="#1a3a6a" stroke="#ccc" stroke-opacity="0.2" stroke-width="1.5"/><circle cx="19" cy="19" r="6.5" fill="#0a4a3a"/><text x="19" y="22" font-size="8" text-anchor="middle" fill="#5a7a70" font-family="Liberation Sans">D</text></svg>
<svg class="a" style="left:741px;top:1049px" width="25" height="22" viewBox="0 0 25 22"><path d="M14 2 Q3 1 2 11 Q3 21 14 20" fill="none" stroke="#0a1a4a" stroke-width="3.5"/><circle cx="21" cy="18" r="2.6" fill="#0a6a5a"/></svg>
<div class="a" style="left:790px;top:1050px;width:23px;height:19px;background:#000;border:1px solid #2c3034"></div>
<div class="a" style="left:793px;top:1054px;width:8px;height:1px;background:#3a3a3a"></div>
<div class="a" style="left:827px;top:1040px;width:48px;height:40px;background:#11161a"></div>
<div class="a" style="left:839px;top:1048px;width:25px;height:24px;background:#2e2e2e;border-radius:3px"></div>
<div class="t" style="left:841.00px;top:1053.46px;font-size:16px;color:#000;font-weight:bold;font-family:'Liberation Sans';"><span style="color:#000">S</span><span style="color:#7a2a0a">T</span></div>
<div class="a" style="left:684px;top:1078px;width:40px;height:2px;background:#1c3650"></div>
<div class="a" style="left:827px;top:1078px;width:48px;height:2px;background:#1c3650"></div>
<svg class="a" style="left:1518px;top:1048px" width="25" height="23" viewBox="0 0 25 23"><path d="M12.5 1 L24.5 22 H0.5Z" fill="#463a0a" stroke="#463a0a" stroke-linejoin="round" stroke-width="1.5"/><path d="M6 12 H15 Q18 12 17 9.5 M7 15 H17 Q20 15 19 18 M8 18 H13" stroke="#1a1606" fill="none" stroke-width="1.2"/></svg>
<div class="t" style="left:1551.00px;top:1052.63px;font-size:13.9px;color:#525252;font-weight:normal;font-family:'Liberation Sans';">alerta de tempestade</div>
<svg class="a" style="left:1707px;top:1055px" width="13" height="8" viewBox="0 0 13 8"><path d="M0.5 7.5 L6.5 1 L12.5 7.5" stroke="#5a5a5a" fill="none" stroke-width="1.2"/></svg>
<svg class="a" style="left:1732px;top:1052px" width="16" height="16" viewBox="0 0 16 16"><g fill="none" stroke="#4a4a4a" stroke-width="1.1"><rect x="1" y="4" width="9" height="8" rx="1"/><path d="M10 6 L14 4 V12 L10 10"/><path d="M3 1 H8 M3 15 H8"/></g></svg>
<svg class="a" style="left:1753px;top:1051px" width="17" height="17" viewBox="0 0 17 17"><g fill="none" stroke="#4a4a4a" stroke-width="1.1"><rect x="4" y="3" width="12" height="9"/><path d="M10 12 V15 M6 15.5 H14 M1 1 H5 V6 H1Z"/></g></svg>
<svg class="a" style="left:1776px;top:1052px" width="17" height="15" viewBox="0 0 17 15"><g fill="none" stroke="#4a4a4a" stroke-width="1.1"><path d="M1 5 H4 L8 1 V14 L4 10 H1Z"/><path d="M11 4 Q13 7.5 11 11 M13.5 2 Q16.5 7.5 13.5 13"/></g></svg>
<div class="t" style="left:1818.70px;top:1045.70px;font-size:10.51px;color:#545454;font-weight:normal;font-family:'Liberation Sans';">18:24</div>
<div class="t" style="left:1803.60px;top:1062.39px;font-size:11.47px;color:#545454;font-weight:normal;font-family:'Liberation Sans';">15/01/2026</div>
<svg class="a" style="left:1879px;top:1051px" width="17" height="18" viewBox="0 0 17 18"><path d="M0.5 0.5 H16.5 V13.5 H9 L5 17 V13.5 H0.5Z" fill="#464646"/><path d="M3 4 H14 M3 7 H14 M3 10 H10" stroke="#0a0d10" stroke-width="1"/><circle cx="13.5" cy="14" r="3" fill="#0a0d10" stroke="#464646"/></svg>
<div class="a" style="left:1915px;top:1040px;width:1px;height:40px;background:#2a2e32"></div>
<div class="a" style="left:407px;top:149px;width:1105px;height:741px;background:#e3e6e9;border-radius:5px 5px 4px 4px"></div>
<div class="a" style="left:407px;top:149px;width:1105px;height:29px;border-radius:5px 5px 0 0;background:linear-gradient(#e4e8ec 0px,#e6e8ea 1.5px,#dfe1e3 5px,#d2d5d8 8.5px,#bcc4cd 9.5px,#c4cad2 14px,#dce0e4 22px,#e3e6e9 28px)"></div>
<div class="a" style="left:407px;top:155px;width:2px;height:728px;background:#f2f3f5"></div>
<div class="a" style="left:409px;top:883px;width:1100px;height:6px;background:linear-gradient(#e3e6e9,#d8dce1)"></div>
<div class="t" style="left:414.60px;top:157.13px;font-size:11.66px;color:#3a3a52;font-weight:normal;font-family:'Liberation Sans';">Cadastro de Produtos</div>
<svg class="a" style="left:1491px;top:159px" width="10" height="10" viewBox="0 0 10 10"><path d="M1 1 L9 9 M9 1 L1 9" stroke="#fff" stroke-opacity="0.6" stroke-width="2.2" transform="translate(0,0.8)"/><path d="M1 1 L9 9 M9 1 L1 9" stroke="#6a7888" stroke-width="2.2"/></svg>
<div class="a" style="left:414px;top:179px;width:1091px;height:240px;border:1px solid #b4bcc6;border-bottom-color:#c0c6cc"></div>
<div class="t" style="left:432.50px;top:191.11px;font-size:10.26px;color:#10101a;font-weight:normal;font-family:'Liberation Sans';">Descrição</div>
<div class="a" style="left:431px;top:203px;width:429px;height:23px;background:#fff;border:1px solid #666;box-shadow:0 0 0 1px #eef0f2"></div>
<div class="a" style="left:433px;top:205px;width:1px;height:16px;background:#000"></div>
<div class="t" style="left:876.00px;top:188.51px;font-size:10.62px;color:#10101a;font-weight:normal;font-family:'Liberation Sans';">Tipo de Produto</div>
<div class="a" style="left:878px;top:204px;width:338px;height:23px;background:#fff;border:1px solid #bcc4d0;box-shadow:0 0 0 1px #e9ecef"></div>
<div class="t" style="left:882.00px;top:209.62px;font-size:12.03px;color:#111;font-weight:normal;font-family:'Liberation Sans';">00-MERCADORIA PARA REVENDA</div>
<svg class="a" style="left:1204px;top:214px" width="5" height="3" viewBox="0 0 5 3"><path d="M0 0 L5 0 L2.5 3Z" fill="#5a6878"/></svg>
<div class="t" style="left:432.50px;top:236.90px;font-size:10.51px;color:#10101a;font-weight:normal;font-family:'Liberation Sans';">Código de Barras</div>
<div class="a" style="left:433px;top:250px;width:104px;height:23px;background:#fff;border:1px solid #666;box-shadow:0 0 0 1px #eef0f2"></div>
<div class="a" style="left:539.6px;top:250px;width:22px;height:23px;background:linear-gradient(90deg,#e2e6ea,#eef0f2 40%,#e8ebee);border:1px solid #bcc4d0;border-radius:3px;box-shadow:inset 0 0 0 1px #f4f6f8"></div>
<svg class="a" style="left:544.6px;top:255px" width="13" height="13" viewBox="0 0 13 13"><rect x="0" y="0" width="13" height="13" fill="#fdfdfd"/><rect x="1" y="12" width="11" height="1" fill="#c8c8c8"/><circle cx="5" cy="4.6" r="3.6" fill="#f8c470" stroke="#d4d4d4" stroke-width="1.3"/><circle cx="4" cy="3.6" r="1.2" fill="#fde8c0"/><path d="M7.6 7.4 L11.3 11.3" stroke="#3b8fc0" stroke-width="2.2" stroke-linecap="round"/></svg>
<div class="t" style="left:565.50px;top:236.73px;font-size:10.71px;color:#10101a;font-weight:normal;font-family:'Liberation Sans';">Cód. Barras (Caixa)</div>
<div class="a" style="left:567px;top:250px;width:120px;height:23px;background:#fff;border:1px solid #666;box-shadow:0 0 0 1px #eef0f2"></div>
<div class="t" style="left:696.40px;top:236.77px;font-size:10.67px;color:#10101a;font-weight:normal;font-family:'Liberation Sans';">Referência</div>
<div class="a" style="left:697px;top:250px;width:103px;height:23px;background:#fff;border:1px solid #666;box-shadow:0 0 0 1px #eef0f2"></div>
<div class="t" style="left:876.00px;top:237.04px;font-size:10.58px;color:#10101a;font-weight:normal;font-family:'Liberation Sans';">Tamanho/Medida</div>
<div class="a" style="left:876px;top:250px;width:101px;height:23px;background:#fff;border:1px solid #666;box-shadow:0 0 0 1px #eef0f2"></div>
<div class="t" style="left:982.60px;top:236.28px;font-size:10.3px;color:#10101a;font-weight:normal;font-family:'Liberation Sans';">Cor</div>
<div class="a" style="left:983px;top:250px;width:152px;height:23px;background:#fff;border:1px solid #666;box-shadow:0 0 0 1px #eef0f2"></div>
<div class="t" style="left:985.20px;top:256.30px;font-size:11.11px;color:#111;font-weight:normal;font-family:'Liberation Sans';">DIVERSAS</div>
<div class="t" style="left:1139.40px;top:233.16px;font-size:13.04px;color:#10101a;font-weight:normal;font-family:'Liberation Sans';">Ordem Touch</div>
<div class="a" style="left:1143px;top:249px;width:73px;height:23px;background:#fff;border:1px solid #bcc4d0;box-shadow:0 0 0 1px #e9ecef"></div>
<div class="t" style="left:1145.10px;top:256.31px;font-size:10.5px;color:#111;font-weight:normal;font-family:'Liberation Sans';">A</div>
<svg class="a" style="left:1204px;top:259px" width="5" height="3" viewBox="0 0 5 3"><path d="M0 0 L5 0 L2.5 3Z" fill="#5a6878"/></svg>
<div class="t" style="left:430.60px;top:283.81px;font-size:10.26px;color:#10101a;font-weight:normal;font-family:'Liberation Sans';">Marca</div>
<div class="a" style="left:431px;top:299px;width:182px;height:23px;background:#fff;border:1px solid #666;box-shadow:0 0 0 1px #eef0f2"></div>
<svg class="a" style="left:601px;top:309px" width="5" height="3" viewBox="0 0 5 3"><path d="M0 0 L5 0 L2.5 3Z" fill="#5a6878"/></svg>
<div class="a" style="left:617px;top:299px;width:22px;height:23px;background:linear-gradient(90deg,#e2e6ea,#eef0f2 40%,#e8ebee);border:1px solid #bcc4d0;border-radius:3px;box-shadow:inset 0 0 0 1px #f4f6f8"></div>
<svg class="a" style="left:622px;top:304px" width="13" height="13" viewBox="0 0 13 13"><rect x="0" y="0" width="13" height="13" fill="#fdfdfd"/><rect x="1" y="12" width="11" height="1" fill="#c8c8c8"/><circle cx="5" cy="4.6" r="3.6" fill="#f8c470" stroke="#d4d4d4" stroke-width="1.3"/><circle cx="4" cy="3.6" r="1.2" fill="#fde8c0"/><path d="M7.6 7.4 L11.3 11.3" stroke="#3b8fc0" stroke-width="2.2" stroke-linecap="round"/></svg>
<div class="t" style="left:647.00px;top:283.60px;font-size:10.51px;color:#10101a;font-weight:normal;font-family:'Liberation Sans';">Grupo</div>
<div class="a" style="left:647px;top:299px;width:195px;height:23px;background:#fff;border:1px solid #666;box-shadow:0 0 0 1px #eef0f2"></div>
<svg class="a" style="left:830px;top:309px" width="5" height="3" viewBox="0 0 5 3"><path d="M0 0 L5 0 L2.5 3Z" fill="#5a6878"/></svg>
<div class="a" style="left:846.5px;top:299px;width:22px;height:23px;background:linear-gradient(90deg,#e2e6ea,#eef0f2 40%,#e8ebee);border:1px solid #bcc4d0;border-radius:3px;box-shadow:inset 0 0 0 1px #f4f6f8"></div>
<svg class="a" style="left:851.5px;top:304px" width="13" height="13" viewBox="0 0 13 13"><rect x="0" y="0" width="13" height="13" fill="#fdfdfd"/><rect x="1" y="12" width="11" height="1" fill="#c8c8c8"/><circle cx="5" cy="4.6" r="3.6" fill="#f8c470" stroke="#d4d4d4" stroke-width="1.3"/><circle cx="4" cy="3.6" r="1.2" fill="#fde8c0"/><path d="M7.6 7.4 L11.3 11.3" stroke="#3b8fc0" stroke-width="2.2" stroke-linecap="round"/></svg>
<div class="t" style="left:876.10px;top:279.80px;font-size:13.23px;color:#10101a;font-weight:normal;font-family:'Liberation Sans';">Ultimo Fornecedor</div>
<div class="a" style="left:877px;top:298px;width:313px;height:23px;background:#fff;border:1px solid #bcc4d0;box-shadow:0 0 0 1px #e9ecef"></div>
<svg class="a" style="left:1178px;top:308px" width="5" height="3" viewBox="0 0 5 3"><path d="M0 0 L5 0 L2.5 3Z" fill="#5a6878"/></svg>
<div class="a" style="left:1196px;top:295px;width:23px;height:23px;background:linear-gradient(90deg,#e2e6ea,#eef0f2 40%,#e8ebee);border:1px solid #bcc4d0;border-radius:3px;box-shadow:inset 0 0 0 1px #f4f6f8"></div>
<svg class="a" style="left:1201px;top:300px" width="13" height="13" viewBox="0 0 13 13"><rect x="0" y="0" width="13" height="13" fill="#fdfdfd"/><rect x="1" y="12" width="11" height="1" fill="#c8c8c8"/><circle cx="5" cy="4.6" r="3.6" fill="#f8c470" stroke="#d4d4d4" stroke-width="1.3"/><circle cx="4" cy="3.6" r="1.2" fill="#fde8c0"/><path d="M7.6 7.4 L11.3 11.3" stroke="#3b8fc0" stroke-width="2.2" stroke-linecap="round"/></svg>
<div class="a" style="left:432px;top:330px;width:306px;height:22px;background:#1b62a5;border:1px solid #000"></div>
<div class="t" style="left:585.00px;transform:translateX(-50%);top:335.08px;font-size:12.9px;color:#fff;font-weight:normal;font-family:'Liberation Sans';">Preço de Custo e Venda</div>
<div class="a" style="left:744px;top:330px;width:152px;height:22px;background:#1b62a5;border:1px solid #000"></div>
<div class="t" style="left:820.00px;transform:translateX(-50%);top:335.22px;font-size:12.73px;color:#fff;font-weight:normal;font-family:'Liberation Sans';">Estoque</div>
<div class="a" style="left:903px;top:330px;width:80px;height:22px;background:#1b62a5;border:1px solid #000"></div>
<div class="t" style="left:943.00px;transform:translateX(-50%);top:335.36px;font-size:12.57px;color:#fff;font-weight:normal;font-family:'Liberation Sans';">Comissão</div>
<div class="a" style="left:991px;top:330px;width:97px;height:22px;background:#1b62a5;border:1px solid #000"></div>
<div class="t" style="left:1039.50px;transform:translateX(-50%);top:335.27px;font-size:12.68px;color:#fff;font-weight:normal;font-family:'Liberation Sans';">Peso Liq/Bru</div>
<div class="a" style="left:1094px;top:330px;width:126px;height:22px;background:#1b62a5;border:1px solid #000"></div>
<div class="t" style="left:1157.00px;transform:translateX(-50%);top:335.09px;font-size:12.89px;color:#fff;font-weight:normal;font-family:'Liberation Sans';">Unidade</div>
<div class="t" style="left:436.30px;top:356.10px;font-size:12.3px;color:#000;font-weight:bold;font-family:'Liberation Serif';">Custo Médio</div>
<div class="t" style="left:514.10px;top:355.60px;font-size:12.89px;color:#000;font-weight:bold;font-family:'Liberation Serif';">Preço Custo</div>
<div class="t" style="left:595.80px;top:355.55px;font-size:12.96px;color:#000;font-weight:bold;font-family:'Liberation Serif';">% Lucro</div>
<div class="t" style="left:663.20px;top:355.86px;font-size:12.59px;color:#000;font-weight:bold;font-family:'Liberation Serif';">Preço Venda</div>
<div class="t" style="left:750.10px;top:355.79px;font-size:12.67px;color:#000;font-weight:bold;font-family:'Liberation Serif';">Inicial</div>
<div class="t" style="left:800.20px;top:356.17px;font-size:12.22px;color:#000;font-weight:bold;font-family:'Liberation Serif';">Mínimo</div>
<div class="t" style="left:862.00px;top:355.92px;font-size:12.51px;color:#000;font-weight:bold;font-family:'Liberation Serif';">Atual</div>
<div class="t" style="left:918.00px;top:355.16px;font-size:13.42px;color:#000;font-weight:bold;font-family:'Liberation Serif';">Percen %</div>
<div class="t" style="left:994.80px;top:356.30px;font-size:12.06px;color:#000;font-weight:bold;font-family:'Liberation Serif';">Liquido</div>
<div class="t" style="left:1048.00px;top:355.68px;font-size:12.8px;color:#000;font-weight:bold;font-family:'Liberation Serif';">Bruto</div>
<div class="t" style="left:1114.00px;top:355.61px;font-size:12.88px;color:#000;font-weight:bold;font-family:'Liberation Serif';">Comercial</div>
<div class="a" style="left:436px;top:369px;width:66px;height:23px;background:#1b62a5;border:1px solid #5e5e5e"></div>
<div class="a" style="left:513px;top:369px;width:68px;height:23px;background:#1b62a5;border:1px solid #5e5e5e"></div>
<div class="t" style="right:1342.40px;top:374.62px;font-size:12.5px;color:#fff;font-weight:normal;font-family:'Liberation Sans';">0,00</div>
<div class="a" style="left:595px;top:369px;width:49px;height:23px;background:#1b62a5;border:1px solid #5e5e5e"></div>
<div class="t" style="right:1279.20px;top:374.62px;font-size:12.5px;color:#fff;font-weight:normal;font-family:'Liberation Sans';">0,00</div>
<div class="a" style="left:655px;top:369px;width:78px;height:23px;background:#1b62a5;border:1px solid #5e5e5e"></div>
<div class="t" style="right:1190.10px;top:374.62px;font-size:12.5px;color:#fff;font-weight:normal;font-family:'Liberation Sans';">0,00</div>
<div class="a" style="left:746px;top:369px;width:40px;height:23px;background:#1b62a5;border:1px solid #5e5e5e"></div>
<div class="t" style="right:1137.20px;top:374.62px;font-size:12.5px;color:#fff;font-weight:normal;font-family:'Liberation Sans';">0</div>
<div class="a" style="left:799px;top:369px;width:43px;height:23px;background:#1b62a5;border:1px solid #5e5e5e"></div>
<div class="t" style="right:1081.70px;top:374.62px;font-size:12.5px;color:#fff;font-weight:normal;font-family:'Liberation Sans';">1</div>
<div class="a" style="left:852px;top:369px;width:41px;height:23px;background:#1b62a5;border:1px solid #5e5e5e"></div>
<div class="t" style="right:1030.20px;top:374.62px;font-size:12.5px;color:#fff;font-weight:normal;font-family:'Liberation Sans';">0</div>
<div class="a" style="left:919px;top:369px;width:54px;height:23px;background:#1b62a5;border:1px solid #5e5e5e"></div>
<div class="t" style="right:949.80px;top:374.62px;font-size:12.5px;color:#fff;font-weight:normal;font-family:'Liberation Sans';">0,00</div>
<div class="a" style="left:995px;top:369px;width:39px;height:23px;background:#1b62a5;border:1px solid #5e5e5e"></div>
<div class="a" style="left:1045px;top:369px;width:39px;height:23px;background:#1b62a5;border:1px solid #5e5e5e"></div>
<div class="a" style="left:1094px;top:369px;width:96px;height:23px;background:#fff;border:1px solid #666;box-shadow:0 0 0 1px #eef0f2"></div>
<div class="t" style="left:1098.00px;top:374.10px;font-size:12.88px;color:#111;font-weight:normal;font-family:'Liberation Sans';">UN</div>
<svg class="a" style="left:1178px;top:379px" width="5" height="3" viewBox="0 0 5 3"><path d="M0 0 L5 0 L2.5 3Z" fill="#5a6878"/></svg>
<div class="a" style="left:1196px;top:369px;width:23px;height:23px;background:linear-gradient(90deg,#e2e6ea,#eef0f2 40%,#e8ebee);border:1px solid #bcc4d0;border-radius:3px;box-shadow:inset 0 0 0 1px #f4f6f8"></div>
<svg class="a" style="left:1201px;top:374px" width="13" height="13" viewBox="0 0 13 13"><rect x="0" y="0" width="13" height="13" fill="#fdfdfd"/><rect x="1" y="12" width="11" height="1" fill="#c8c8c8"/><circle cx="5" cy="4.6" r="3.6" fill="#f8c470" stroke="#d4d4d4" stroke-width="1.3"/><circle cx="4" cy="3.6" r="1.2" fill="#fde8c0"/><path d="M7.6 7.4 L11.3 11.3" stroke="#3b8fc0" stroke-width="2.2" stroke-linecap="round"/></svg>
<div class="a" style="left:1243px;top:180px;width:260px;height:236px;border:1px solid #b4bcc6;background:#eef0f2"></div>
<div class="a" style="left:1245px;top:184px;width:255px;height:230px;background:#fff;border:1px solid #c8d0d8"></div>
<svg class="a" style="left:1315px;top:228px" width="110" height="72" viewBox="0 0 110 72"><path d="M0 14 Q0 9.5 5 9.5 L52 9.5 L58 1 Q59 0 61 0 L88 0 Q90 0 91 1 L97 9.5 L104 9.5 Q109 9.5 109 14 L109 66 Q109 70.5 104 70.5 L5 70.5 Q0 70.5 0 66Z" fill="#9e9e9e"/><circle cx="73.5" cy="41.5" r="20.5" fill="#9e9e9e" stroke="#fff" stroke-width="7.5"/><rect x="10" y="24.5" width="26" height="12" rx="6" fill="#fff"/></svg>
<div class="t" style="left:1369.90px;transform:translateX(-50%);top:310.59px;font-size:28.84px;color:#9d9d9d;font-weight:bold;font-family:'Liberation Sans';">imagem</div>
<div class="t" style="left:1370.10px;transform:translateX(-50%);top:336.45px;font-size:28.65px;color:#9d9d9d;font-weight:bold;font-family:'Liberation Sans';">não disponível</div>
<div class="a" style="left:414px;top:420px;width:1091px;height:1px;background:#fafbfc"></div>
<div class="a" style="left:414px;top:421px;width:1091px;height:31px;background:#1b62a5;border-right:1px solid #8a8580;border-bottom:1px solid #8a8580"></div>
<div class="t" style="left:423.30px;top:430.68px;font-size:12.32px;color:#fff;font-weight:bold;font-family:'Liberation Serif';">GOOD BOM SUPERMERCADOS</div>
<div class="a" style="left:1250px;top:425px;width:250px;height:23px;background:#e0e0e0;border:1px solid #a8a29c;border-top-color:#c8c4c0;border-left-color:#c8c4c0"></div>
<div class="t" style="left:1338.00px;top:430.93px;font-size:10.83px;color:#111;font-weight:normal;font-family:'Liberation Sans';">Limpar Imagem</div>
<div class="a" style="left:418px;top:457px;width:108px;height:343px;background:#1e6ab4"></div>
<div class="a" style="left:422px;top:460px;width:101px;height:29px;background:#cce4f7;border:1px solid #bcd6ee"></div>
<div class="t" style="left:443.20px;top:469.84px;font-size:11.89px;color:#000;font-weight:normal;font-family:'Liberation Serif';">Parametros</div>
<div class="a" style="left:421px;top:494px;width:102px;height:29px;background:#e1e1e1;border:1px solid #cfcac6;border-bottom-color:#b8b2ac;border-right-color:#b8b2ac"></div>
<div class="t" style="left:443.20px;top:502.66px;font-size:12.46px;color:#000;font-weight:normal;font-family:'Liberation Serif';">Impostos</div>
<div class="a" style="left:421px;top:527px;width:102px;height:29px;background:#e1e1e1;border:1px solid #cfcac6;border-bottom-color:#b8b2ac;border-right-color:#b8b2ac"></div>
<div class="t" style="left:443.20px;top:536.35px;font-size:12.0px;color:#000;font-weight:normal;font-family:'Liberation Serif';">Composição</div>
<div class="a" style="left:421px;top:560px;width:102px;height:29px;background:#e1e1e1;border:1px solid #cfcac6;border-bottom-color:#b8b2ac;border-right-color:#b8b2ac"></div>
<div class="t" style="left:443.20px;top:569.33px;font-size:11.79px;color:#000;font-weight:normal;font-family:'Liberation Serif';">Grade / Lote</div>
<div class="a" style="left:421px;top:593px;width:102px;height:29px;background:#e1e1e1;border:1px solid #cfcac6;border-bottom-color:#b8b2ac;border-right-color:#b8b2ac"></div>
<div class="t" style="left:443.20px;top:602.91px;font-size:11.81px;color:#000;font-weight:normal;font-family:'Liberation Serif';">Promoção</div>
<div class="a" style="left:421px;top:626px;width:102px;height:28px;background:#e1e1e1;border:1px solid #cfcac6;border-bottom-color:#b8b2ac;border-right-color:#b8b2ac"></div>
<div class="t" style="left:443.20px;top:635.83px;font-size:11.66px;color:#000;font-weight:normal;font-family:'Liberation Serif';">Adicionais</div>
<div class="a" style="left:421px;top:658px;width:102px;height:28px;background:#e1e1e1;border:1px solid #cfcac6;border-bottom-color:#b8b2ac;border-right-color:#b8b2ac"></div>
<div class="t" style="left:443.20px;top:668.05px;font-size:11.4px;color:#000;font-weight:normal;font-family:'Liberation Serif';">Balança</div>
<div class="a" style="left:421px;top:690px;width:102px;height:28px;background:#e1e1e1;border:1px solid #cfcac6;border-bottom-color:#b8b2ac;border-right-color:#b8b2ac"></div>
<div class="t" style="left:443.20px;top:699.43px;font-size:11.91px;color:#000;font-weight:normal;font-family:'Liberation Serif';">Combustivel</div>
<div class="a" style="left:421px;top:722px;width:102px;height:28px;background:#e1e1e1;border:1px solid #cfcac6;border-bottom-color:#b8b2ac;border-right-color:#b8b2ac"></div>
<div class="t" style="left:443.20px;top:732.27px;font-size:11.68px;color:#000;font-weight:normal;font-family:'Liberation Serif';">Tabela Preços</div>
<div class="a" style="left:421px;top:754px;width:102px;height:27px;background:#e1e1e1;border:1px solid #cfcac6;border-bottom-color:#b8b2ac;border-right-color:#b8b2ac"></div>
<div class="t" style="left:443.20px;top:764.13px;font-size:11.55px;color:#000;font-weight:normal;font-family:'Liberation Serif';">Referencias</div>
<svg class="a" style="left:423px;top:466px" width="16" height="16" viewBox="0 0 16 16"><rect x="0.5" y="0.5" width="10" height="11" fill="#dfe6ee" stroke="#3a4a60"/><rect x="2.5" y="0.5" width="6" height="4" fill="#3a4a60"/><rect x="5.5" y="4.5" width="10" height="10" fill="#fff" stroke="#3a4a60"/><circle cx="10" cy="9" r="2.5" fill="none" stroke="#3a4a60" stroke-width="1.2"/><path d="M12 11 L15 14.5" stroke="#3a4a60" stroke-width="1.5"/></svg>
<svg class="a" style="left:423px;top:500px" width="16" height="16" viewBox="0 0 16 16"><circle cx="8" cy="8" r="7.5" fill="#6ab04c"/><path d="M8 8 L8 0.5 A7.5 7.5 0 0 1 15.5 8Z" fill="#f7b267"/><path d="M8 8 L15.5 8 A7.5 7.5 0 0 1 8 15.5Z" fill="#7fb8e8"/></svg>
<svg class="a" style="left:423px;top:533px" width="16" height="16" viewBox="0 0 16 16"><rect x="1" y="2" width="10" height="13" rx="1" fill="#f0b050"/><rect x="3" y="1" width="8" height="12" fill="#f4f8fc" stroke="#8090a0" stroke-width="0.8"/><path d="M5 15 L15 5 L16 7 L7 16Z" fill="#f0c040" stroke="#806020" stroke-width="0.6"/></svg>
<svg class="a" style="left:423px;top:566px" width="16" height="16" viewBox="0 0 16 16"><rect x="1.5" y="2.5" width="12" height="11" rx="1" fill="#e8e8e8" stroke="#333"/><g fill="#333"><rect x="4" y="4.5" width="1" height="7"/><rect x="6" y="4.5" width="1.5" height="7"/><rect x="8.5" y="4.5" width="1" height="7"/><rect x="10.5" y="4.5" width="1" height="7"/></g></svg>
<svg class="a" style="left:423px;top:599px" width="16" height="16" viewBox="0 0 16 16"><path d="M1 9 L8 2 L14 2 L14 8 L7 15Z" fill="#2a6ac8" stroke="#1a4a90" stroke-width="0.8"/><text x="5" y="12" font-size="7" fill="#fff" font-family="Liberation Sans" transform="rotate(-45 7 9)">$</text><path d="M12 4 Q17 10 13 15" stroke="#a07040" fill="none" stroke-width="1.2"/></svg>
<svg class="a" style="left:423px;top:632px" width="16" height="16" viewBox="0 0 16 16"><rect x="1" y="0" width="12" height="2" fill="#5060c0"/><rect x="1" y="2" width="12" height="11" fill="#8ab8f0"/><circle cx="12" cy="12" r="4" fill="#2fa84f"/><path d="M12 9.5 V14.5 M9.5 12 H14.5" stroke="#fff" stroke-width="1.5"/></svg>
<svg class="a" style="left:423px;top:664px" width="16" height="16" viewBox="0 0 16 16"><circle cx="8" cy="8" r="7.3" fill="#f4f8fc" stroke="#3a6ac0" stroke-width="1.3"/><path d="M8 9 L12 4" stroke="#222" stroke-width="1.6"/><circle cx="7.5" cy="9.5" r="1.5" fill="#222"/><path d="M12 9 L11 13" stroke="#e04040" stroke-width="1.5"/></svg>
<svg class="a" style="left:423px;top:696px" width="16" height="16" viewBox="0 0 16 16"><rect x="0.5" y="0.5" width="14" height="14" rx="2" fill="#f0b040" stroke="#a06010"/><rect x="2.5" y="2.5" width="10" height="7" fill="#3a4a6a"/><rect x="1" y="14" width="3" height="2" fill="#222"/><rect x="11" y="14" width="3" height="2" fill="#222"/></svg>
<svg class="a" style="left:423px;top:728px" width="16" height="16" viewBox="0 0 16 16"><circle cx="5.5" cy="5.5" r="5" fill="#f7c090" stroke="#e08040" stroke-width="0.8"/><circle cx="10.5" cy="10.5" r="5.3" fill="#6ac04a" stroke="#3a8a2a" stroke-width="0.8"/><text x="7.8" y="14" font-size="8" font-weight="bold" fill="#1a5a1a" font-family="Liberation Sans">$</text></svg>
<svg class="a" style="left:423px;top:760px" width="16" height="16" viewBox="0 0 16 16"><rect x="0.5" y="0.5" width="9" height="10" fill="#fff" stroke="#a0a8b0"/><rect x="5.5" y="5.5" width="10" height="10" fill="#fff" stroke="#a0a8b0"/><path d="M7.5 10 L10 13 L14.5 7" stroke="#2a70c8" stroke-width="1.6" fill="none"/></svg>
<div class="a" style="left:533px;top:458px;width:972px;height:342px;border-left:1px solid #c4cad0;border-top:1px solid #c4cad0;border-bottom:1px solid #b8bec6"></div>
<div class="a" style="left:553px;top:482px;width:407px;height:269px;border:1px solid #c8cdd2;border-radius:4px"></div>
<div class="a" style="left:558px;top:476px;width:131px;height:12px;background:#e3e6e9"></div>
<div class="t" style="left:560.20px;top:474.72px;font-size:11.44px;color:#3c4a5c;font-weight:normal;font-family:'Liberation Sans';">Opções de Configuração</div>
<div class="a" style="left:559px;top:495px;width:13px;height:13px;background:linear-gradient(135deg,#cdd2d8,#f6f7f8);border:1px solid #9fb6d4;box-shadow:inset 0 0 0 1px #f0f2f4"></div>
<svg class="a" style="left:561px;top:497px" width="9" height="9" viewBox="0 0 9 9"><path d="M1 5 L3.5 8 L8.5 1" stroke="#4a5a70" stroke-width="1.8" fill="none"/></svg>
<div class="t" style="left:576.20px;top:496.22px;font-size:12.5px;color:#000;font-weight:normal;font-family:'Liberation Sans';">Ativo</div>
<div class="a" style="left:559px;top:515px;width:13px;height:13px;background:linear-gradient(135deg,#cdd2d8,#f6f7f8);border:1px solid #9fb6d4;box-shadow:inset 0 0 0 1px #f0f2f4"></div>
<svg class="a" style="left:561px;top:517px" width="9" height="9" viewBox="0 0 9 9"><path d="M1 5 L3.5 8 L8.5 1" stroke="#4a5a70" stroke-width="1.8" fill="none"/></svg>
<div class="t" style="left:576.20px;top:516.54px;font-size:12.71px;color:#000;font-weight:normal;font-family:'Liberation Sans';">Permite Venda</div>
<div class="a" style="left:559px;top:535px;width:13px;height:13px;background:linear-gradient(135deg,#cdd2d8,#f6f7f8);border:1px solid #9fb6d4;box-shadow:inset 0 0 0 1px #f0f2f4"></div>
<div class="t" style="left:576.20px;top:537.73px;font-size:12.25px;color:#000;font-weight:normal;font-family:'Liberation Sans';">Paga Comissão</div>
<div class="a" style="left:559px;top:557px;width:13px;height:13px;background:linear-gradient(135deg,#cdd2d8,#f6f7f8);border:1px solid #9fb6d4;box-shadow:inset 0 0 0 1px #f0f2f4"></div>
<div class="t" style="left:576.20px;top:558.20px;font-size:12.64px;color:#000;font-weight:normal;font-family:'Liberation Sans';">Preço Variavel</div>
<div class="a" style="left:559px;top:578px;width:13px;height:13px;background:#fff;border:1px solid #c8ccd0"></div>
<div class="t" style="left:576.20px;top:579.38px;font-size:12.31px;color:#a0a0a0;font-weight:normal;font-family:'Liberation Sans';">Composição</div>
<div class="a" style="left:559px;top:599px;width:13px;height:13px;background:linear-gradient(135deg,#cdd2d8,#f6f7f8);border:1px solid #9fb6d4;box-shadow:inset 0 0 0 1px #f0f2f4"></div>
<div class="t" style="left:576.20px;top:601.13px;font-size:12.37px;color:#000;font-weight:normal;font-family:'Liberation Sans';">Serviço</div>
<div class="a" style="left:559px;top:622px;width:13px;height:13px;background:#fff;border:1px solid #c8ccd0"></div>
<div class="t" style="left:576.20px;top:624.06px;font-size:12.39px;color:#a0a0a0;font-weight:normal;font-family:'Liberation Sans';">Grade/Lote</div>
<div class="a" style="left:559px;top:647px;width:13px;height:13px;background:linear-gradient(135deg,#cdd2d8,#f6f7f8);border:1px solid #9fb6d4;box-shadow:inset 0 0 0 1px #f0f2f4"></div>
<div class="t" style="left:576.20px;top:647.52px;font-size:12.73px;color:#000;font-weight:normal;font-family:'Liberation Sans';">Usar Tab. Preço</div>
<div class="a" style="left:559px;top:669px;width:13px;height:13px;background:linear-gradient(135deg,#cdd2d8,#f6f7f8);border:1px solid #9fb6d4;box-shadow:inset 0 0 0 1px #f0f2f4"></div>
<div class="t" style="left:576.20px;top:669.90px;font-size:12.28px;color:#000;font-weight:normal;font-family:'Liberation Sans';">Combustível</div>
<div class="a" style="left:559px;top:690px;width:13px;height:13px;background:linear-gradient(135deg,#cdd2d8,#f6f7f8);border:1px solid #9fb6d4;box-shadow:inset 0 0 0 1px #f0f2f4"></div>
<div class="t" style="left:576.20px;top:692.14px;font-size:12.3px;color:#000;font-weight:normal;font-family:'Liberation Sans';">Usar na IMEI</div>
<div class="a" style="left:775px;top:494px;width:13px;height:13px;background:linear-gradient(135deg,#cdd2d8,#f6f7f8);border:1px solid #9fb6d4;box-shadow:inset 0 0 0 1px #f0f2f4"></div>
<div class="t" style="left:792.20px;top:494.45px;font-size:12.7px;color:#000;font-weight:normal;font-family:'Liberation Sans';">Produto + 18</div>
<div class="a" style="left:775px;top:516px;width:13px;height:13px;background:linear-gradient(135deg,#cdd2d8,#f6f7f8);border:1px solid #9fb6d4;box-shadow:inset 0 0 0 1px #f0f2f4"></div>
<div class="t" style="left:792.20px;top:517.78px;font-size:12.43px;color:#000;font-weight:normal;font-family:'Liberation Sans';">Controla Est.Grade</div>
<div class="a" style="left:775px;top:539px;width:13px;height:13px;background:linear-gradient(135deg,#cdd2d8,#f6f7f8);border:1px solid #9fb6d4;box-shadow:inset 0 0 0 1px #f0f2f4"></div>
<div class="t" style="left:792.20px;top:538.00px;font-size:13.11px;color:#000;font-weight:normal;font-family:'Liberation Sans';">Integrar e-commerce</div>
<div class="a" style="left:775px;top:561px;width:13px;height:13px;background:linear-gradient(135deg,#cdd2d8,#f6f7f8);border:1px solid #9fb6d4;box-shadow:inset 0 0 0 1px #f0f2f4"></div>
<div class="t" style="left:792.20px;top:561.39px;font-size:12.42px;color:#000;font-weight:normal;font-family:'Liberation Sans';">Pedir na Cozinha</div>
<div class="a" style="left:775px;top:583px;width:13px;height:13px;background:linear-gradient(135deg,#cdd2d8,#f6f7f8);border:1px solid #9fb6d4;box-shadow:inset 0 0 0 1px #f0f2f4"></div>
<div class="t" style="left:792.20px;top:582.93px;font-size:13.19px;color:#000;font-weight:normal;font-family:'Liberation Sans';">Medicamento</div>
<div class="a" style="left:775px;top:606px;width:13px;height:13px;background:linear-gradient(135deg,#cdd2d8,#f6f7f8);border:1px solid #9fb6d4;box-shadow:inset 0 0 0 1px #f0f2f4"></div>
<svg class="a" style="left:777px;top:608px" width="9" height="9" viewBox="0 0 9 9"><path d="M1 5 L3.5 8 L8.5 1" stroke="#4a5a70" stroke-width="1.8" fill="none"/></svg>
<div class="t" style="left:792.20px;top:606.36px;font-size:12.8px;color:#000;font-weight:normal;font-family:'Liberation Sans';">Mostrar no App</div>
<div class="a" style="left:775px;top:628px;width:13px;height:13px;background:linear-gradient(135deg,#cdd2d8,#f6f7f8);border:1px solid #9fb6d4;box-shadow:inset 0 0 0 1px #f0f2f4"></div>
<div class="t" style="left:792.20px;top:628.52px;font-size:12.5px;color:#000;font-weight:normal;font-family:'Liberation Sans';">Fabricado</div>
<div class="a" style="left:775px;top:650px;width:13px;height:13px;background:linear-gradient(135deg,#cdd2d8,#f6f7f8);border:1px solid #9fb6d4;box-shadow:inset 0 0 0 1px #f0f2f4"></div>
<div class="t" style="left:792.20px;top:650.91px;font-size:12.39px;color:#000;font-weight:normal;font-family:'Liberation Sans';">Adicional</div>
<svg class="a" style="left:990px;top:490px" width="43" height="28" viewBox="0 0 43 28"><path d="M0 27 Q4 10 26 9 L26 0 L43 13.5 L26 27 L26 17 Q10 16 0 27Z" fill="#1e78d2"/></svg>
<div class="t" style="left:1043.40px;top:483.80px;font-size:15.59px;color:#111;font-weight:normal;font-family:'Liberation Sans';">Código</div>
<svg class="a" style="left:1045px;top:507px" width="10" height="16" viewBox="0 0 10 16"><path d="M3.8 0.8 L8.3 0.8 L8.3 15.6 L4.4 15.6 L4.4 5.2 Q2.8 6.3 0.6 6.9 L0.6 3.6 Q2.6 2.8 3.8 0.8Z" fill="#000"/></svg>
<svg class="a" style="left:1163px;top:487px" width="39" height="34" viewBox="0 0 39 34"><ellipse cx="19.5" cy="17.0" rx="19.5" ry="17.0" fill="#0a9a2a"/><path d="M8 17.0 L16 24.0 L30 12.0" stroke="#fff" stroke-width="4.5" fill="none" stroke-linejoin="miter"/></svg>
<svg class="a" style="left:1163px;top:537px" width="39" height="34" viewBox="0 0 39 34"><ellipse cx="19.5" cy="17.0" rx="19.5" ry="17.0" fill="#0a9a2a"/><path d="M8 17.0 L16 24.0 L30 12.0" stroke="#fff" stroke-width="4.5" fill="none" stroke-linejoin="miter"/></svg>
<svg class="a" style="left:1163px;top:585px" width="39" height="35" viewBox="0 0 39 35"><ellipse cx="19.5" cy="17.5" rx="19.5" ry="17.5" fill="#0a9a2a"/><path d="M8 17.5 L16 24.5 L30 12.5" stroke="#fff" stroke-width="4.5" fill="none" stroke-linejoin="miter"/></svg>
<svg class="a" style="left:1163px;top:635px" width="39" height="35" viewBox="0 0 39 35"><ellipse cx="19.5" cy="17.5" rx="19.5" ry="17.5" fill="#0a9a2a"/><path d="M8 17.5 L16 24.5 L30 12.5" stroke="#fff" stroke-width="4.5" fill="none" stroke-linejoin="miter"/></svg>
<div class="t" style="left:1212.40px;top:485.80px;font-size:15.24px;color:#111;font-weight:normal;font-family:'Liberation Sans';">Estoque na Ult.Compra</div>
<div class="t" style="left:1212.40px;top:505.66px;font-size:16px;color:#000;font-weight:bold;font-family:'Liberation Sans';letter-spacing:0.786px;">0/0</div>
<div class="t" style="left:1211.50px;top:536.90px;font-size:15.12px;color:#111;font-weight:normal;font-family:'Liberation Sans';">Data cadastro</div>
<div class="t" style="left:1212.40px;top:589.52px;font-size:15.45px;color:#111;font-weight:normal;font-family:'Liberation Sans';">Ult.Compra</div>
<div class="t" style="left:1213.40px;top:607.66px;font-size:16px;color:#000;font-weight:bold;font-family:'Liberation Sans';letter-spacing:0.552px;">00/00/0000</div>
<div class="t" style="left:1211.50px;top:637.73px;font-size:14.97px;color:#111;font-weight:normal;font-family:'Liberation Sans';">Tempo Estocagem</div>
<div class="t" style="left:1211.50px;top:660.08px;font-size:15.73px;color:#000;font-weight:bold;font-family:'Liberation Sans';">0dia(s)</div>
<div class="a" style="left:428px;top:818px;width:150px;height:51px;background:#585858;border:1px solid #3c3c3c;border-radius:3px"></div>
<div class="a" style="left:585px;top:818px;width:150px;height:51px;background:#585858;border:1px solid #3c3c3c;border-radius:3px"></div>
<div class="a" style="left:742px;top:818px;width:150px;height:51px;background:#585858;border:1px solid #3c3c3c;border-radius:3px"></div>
<div class="a" style="left:899px;top:818px;width:135px;height:51px;background:#585858;border:1px solid #3c3c3c;border-radius:3px"></div>
<div class="a" style="left:1041px;top:818px;width:150px;height:51px;background:#585858;border:1px solid #3c3c3c;border-radius:3px"></div>
<div class="t" style="left:487.50px;top:837.07px;font-size:13.86px;color:#fff;font-weight:normal;font-family:'Liberation Sans';">F5 | Salvar</div>
<div class="t" style="left:632.50px;top:836.86px;font-size:14.11px;color:#fff;font-weight:normal;font-family:'Liberation Sans';">Usar Foto Ref.</div>
<div class="t" style="left:785.50px;top:836.41px;font-size:15.11px;color:#fff;font-weight:normal;font-family:'Liberation Sans';">Movimentação</div>
<div class="t" style="left:940.00px;top:837.10px;font-size:14.3px;color:#fff;font-weight:normal;font-family:'Liberation Sans';">F5 | Etiquetas</div>
<div class="t" style="left:1103.75px;top:838.05px;font-size:13.17px;color:#fff;font-weight:normal;font-family:'Liberation Sans';">ESC | Sair</div>
<svg class="a" style="left:453px;top:829px" width="28" height="28" viewBox="0 0 28 28"><defs><radialGradient id="gg" cx="40%" cy="35%" r="65%"><stop offset="0" stop-color="#c8f080"/><stop offset="1" stop-color="#3a9a10"/></radialGradient></defs><circle cx="14" cy="14" r="13.5" fill="url(#gg)"/><path d="M7 14 L12 19.5 L21 8" stroke="#fff" stroke-width="3.2" fill="none"/></svg>
<svg class="a" style="left:597px;top:831px" width="30" height="24" viewBox="0 0 30 24"><rect x="0" y="0" width="30" height="24" fill="#f4f6f8" stroke="#c0c8d0"/><rect x="2.5" y="2.5" width="25" height="19" fill="#7ab848"/><rect x="2.5" y="2.5" width="25" height="10" fill="#a8d0f0"/><circle cx="19" cy="10" r="6" fill="#f0a020"/><circle cx="19" cy="10" r="3" fill="#8a5010"/></svg>
<svg class="a" style="left:750px;top:828px" width="29" height="29" viewBox="0 0 29 29"><rect x="0.5" y="0.5" width="28" height="28" rx="1" fill="#f4f8fc" stroke="#8aa8c8"/><rect x="6" y="4" width="17" height="2" fill="#7ab848"/><g fill="#3a80d0"><rect x="5" y="15" width="2" height="9"/><rect x="13" y="12" width="2" height="12"/></g><g fill="#f08030"><rect x="9" y="17" width="2" height="7"/><rect x="17" y="9" width="2" height="15"/></g><rect x="21" y="11" width="3" height="3" fill="#40a0e0"/><rect x="21" y="16" width="3" height="3" fill="#f08030"/><rect x="21" y="21" width="3" height="3" fill="#e05030"/></svg>
<svg class="a" style="left:905px;top:831px" width="30" height="24" viewBox="0 0 30 24"><rect x="0.5" y="0.5" width="29" height="23" fill="#f4f6f8" stroke="#8aa8c8"/><g fill="#222"><rect x="4" y="4" width="1.5" height="16"/><rect x="7" y="4" width="1" height="16"/><rect x="9.5" y="4" width="2" height="16"/><rect x="13" y="4" width="1" height="16"/><rect x="15.5" y="4" width="2" height="16"/><rect x="19" y="4" width="1" height="16"/><rect x="21.5" y="4" width="1.5" height="16"/><rect x="24.5" y="4" width="1" height="16"/></g></svg>
<svg class="a" style="left:1070px;top:830px" width="26" height="26" viewBox="0 0 26 26"><defs><linearGradient id="rg" x1="0" y1="0" x2="0" y2="1"><stop offset="0" stop-color="#f05050"/><stop offset="1" stop-color="#c01818"/></linearGradient></defs><rect x="0" y="0" width="26" height="26" rx="2" fill="url(#rg)"/><path d="M8 8 L18 18 M18 8 L8 18" stroke="#fff" stroke-width="4"/></svg>
<div class="t" style="left:1206.20px;top:823.44px;font-size:11.17px;color:#111;font-weight:normal;font-family:'Liberation Sans';">* As opções Grade e Composição</div>
<div class="t" style="left:1206.20px;top:836.12px;font-size:11.44px;color:#111;font-weight:normal;font-family:'Liberation Sans';">estarão disponíveis somente na</div>
<div class="t" style="left:1206.20px;top:849.19px;font-size:11.24px;color:#111;font-weight:normal;font-family:'Liberation Sans';">edição desse item.</div>
</body></html>
